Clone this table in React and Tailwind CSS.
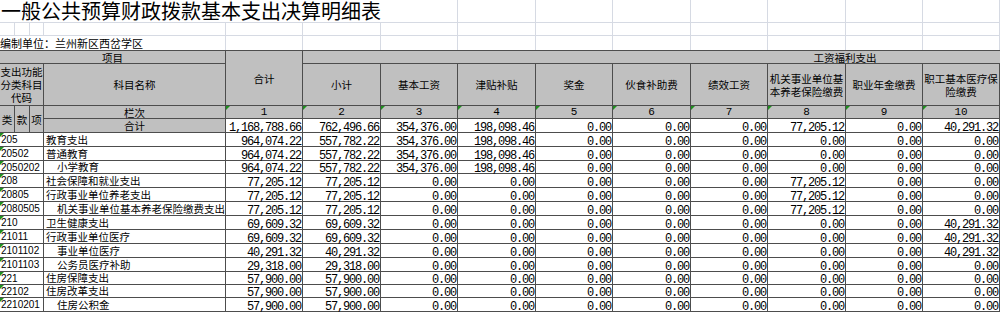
import React from "react";

const Z = "0.00";

const HEAD = [
  ["小计"],
  ["基本工资"],
  ["津贴补贴"],
  ["奖金"],
  ["伙食补助费"],
  ["绩效工资"],
  ["机关事业单位基", "本养老保险缴费"],
  ["职业年金缴费"],
  ["职工基本医疗保", "险缴费"],
];

const TOTAL = ["1,168,788.66", "762,496.66", "354,376.00", "198,098.46", Z, Z, Z, "77,205.12", Z, "40,291.32"];

const EDU = ["964,074.22", "557,782.22", "354,376.00", "198,098.46", Z, Z, Z, Z, Z, Z];
const PENSION = ["77,205.12", "77,205.12", Z, Z, Z, Z, Z, "77,205.12", Z, Z];
const HOUSE = ["57,900.00", "57,900.00", Z, Z, Z, Z, Z, Z, Z, Z];

const ROWS = [
  { code: "205", name: "教育支出", v: EDU },
  { code: "20502", name: "普通教育", v: EDU },
  { code: "2050202", name: "小学教育", v: EDU, sub: true },
  { code: "208", name: "社会保障和就业支出", v: PENSION },
  { code: "20805", name: "行政事业单位养老支出", v: PENSION },
  { code: "2080505", name: "机关事业单位基本养老保险缴费支出", v: PENSION, sub: true },
  { code: "210", name: "卫生健康支出", v: ["69,609.32", "69,609.32", Z, Z, Z, Z, Z, Z, Z, "40,291.32"] },
  { code: "21011", name: "行政事业单位医疗", v: ["69,609.32", "69,609.32", Z, Z, Z, Z, Z, Z, Z, "40,291.32"] },
  { code: "2101102", name: "事业单位医疗", v: ["40,291.32", "40,291.32", Z, Z, Z, Z, Z, Z, Z, "40,291.32"], sub: true },
  { code: "2101103", name: "公务员医疗补助", v: ["29,318.00", "29,318.00", Z, Z, Z, Z, Z, Z, Z, Z], sub: true },
  { code: "221", name: "住房保障支出", v: HOUSE },
  { code: "22102", name: "住房改革支出", v: HOUSE },
  { code: "2210201", name: "住房公积金", v: HOUSE, sub: true },
];

const EXTRA = [0, 1, 2, 3, 4];

// little green "number stored as text" marker
function Tri() {
  return <span className="absolute left-0 top-0 h-0 w-0 border-t-[4px] border-r-[4px] border-t-[#1f8f1f] border-r-transparent" />;
}

function Light({ span = "", noBottom }) {
  return <div className={`${span} border-r border-[#d6dae3] ${noBottom ? "" : "border-b"}`} />;
}

function Num({ children }) {
  return (
    <div className="flex items-end justify-end bg-white border-r border-b border-[#4d4d4d] pr-[1px] font-['Liberation_Mono',monospace] text-[12px] tracking-[-1.2px] leading-[8px] whitespace-nowrap text-black">
      {children}
    </div>
  );
}

export default function App() {
  const hd = "flex items-center justify-center bg-[#c0c0c0] border-r border-b border-[#4d4d4d] text-black text-[10.5px] leading-[13px] text-center whitespace-nowrap";
  return (
    <div className="w-[1000px] h-[312px] overflow-hidden bg-white font-['Noto_Sans_CJK_SC','Noto_Sans',sans-serif] text-black">
      <div className="grid w-[1388px] grid-cols-[15px_15px_14px_182px_77px_78px_77px_78px_77px_78px_77px_78px_77px_77px_78px_77px_78px_77px_78px] grid-rows-[23px_13px_14px_14px_42px_13px_14px_14px_14px_13px_14px_14px_14px_14px_14px_14px_14px_13px_13px_14px]">
        {/* title */}
        <div className="col-span-7 flex items-center border-r border-b border-[#d6dae3] pl-[1px] text-[20px] leading-[22px] whitespace-nowrap">
          一般公共预算财政拨款基本支出决算明细表
        </div>
        {[8, 9, 10, 11, 12, 13, 14, 15, 16, 17, 18, 19].map((i) => <Light key={i} />)}

        {/* blank row */}
        {Array.from({ length: 19 }).map((_, i) => <Light key={i} />)}

        {/* unit */}
        <div className="col-span-4 flex items-center border-r border-[#d6dae3] text-[11px] leading-[13px] pt-[1px] whitespace-nowrap">
          编制单位：兰州新区西岔学区
        </div>
        {Array.from({ length: 15 }).map((_, i) => <Light key={i} noBottom />)}

        {/* header row A */}
        <div className={`${hd} col-span-4 border-t`}>项目</div>
        <div className={`${hd} row-span-2 border-t`}>合计</div>
        <div className={`${hd} col-span-14 border-t`}>工资福利支出</div>

        {/* header row B */}
        <div className={`${hd} col-span-3 text-[10.5px] leading-[12.5px]`}>
          <div>
            <div>支出功能</div>
            <div>分类科目</div>
            <div>代码</div>
          </div>
        </div>
        <div className={hd}>科目名称</div>
        {HEAD.map((h, i) => (
          <div key={i} className={hd}>
            <div>
              {h.map((t, j) => <div key={j}>{t}</div>)}
            </div>
          </div>
        ))}
        {EXTRA.map((i) => <div key={i} className={hd} />)}

        {/* column numbers */}
        <div className={`${hd} row-span-2`}>类</div>
        <div className={`${hd} row-span-2`}>款</div>
        <div className={`${hd} row-span-2`}>项</div>
        <div className={hd}>栏次</div>
        {[1, 2, 3, 4, 5, 6, 7, 8, 9, 10].map((n) => (
          <div key={n} className={`${hd} relative font-['Liberation_Mono',monospace] text-[11px]`}>
            <Tri />
            {n}
          </div>
        ))}
        {EXTRA.map((i) => <div key={i} className={`${hd} relative`}><Tri /></div>)}

        {/* total row */}
        <div className={hd}>合计</div>
        {TOTAL.map((v, i) => <Num key={i}>{v}</Num>)}
        {EXTRA.map((i) => <Num key={i} />)}

        {/* body */}
        {ROWS.map((r) => (
          <React.Fragment key={r.code}>
            <div className="relative col-span-3 flex items-center bg-white border-r border-b border-[#4d4d4d] pl-[1px] font-['Liberation_Sans',sans-serif] text-[10px] leading-none pt-[1px]">
              <Tri />
              {r.code}
            </div>
            <div className={`flex items-center bg-white border-r border-b border-[#4d4d4d] text-[10.5px] leading-none pt-[1px] whitespace-nowrap ${r.sub ? "pl-[13px]" : "pl-[2px]"}`}>
              {r.name}
            </div>
            {r.v.map((v, i) => <Num key={i}>{v}</Num>)}
            {EXTRA.map((i) => <Num key={i} />)}
          </React.Fragment>
        ))}
      </div>
    </div>
  );
}
